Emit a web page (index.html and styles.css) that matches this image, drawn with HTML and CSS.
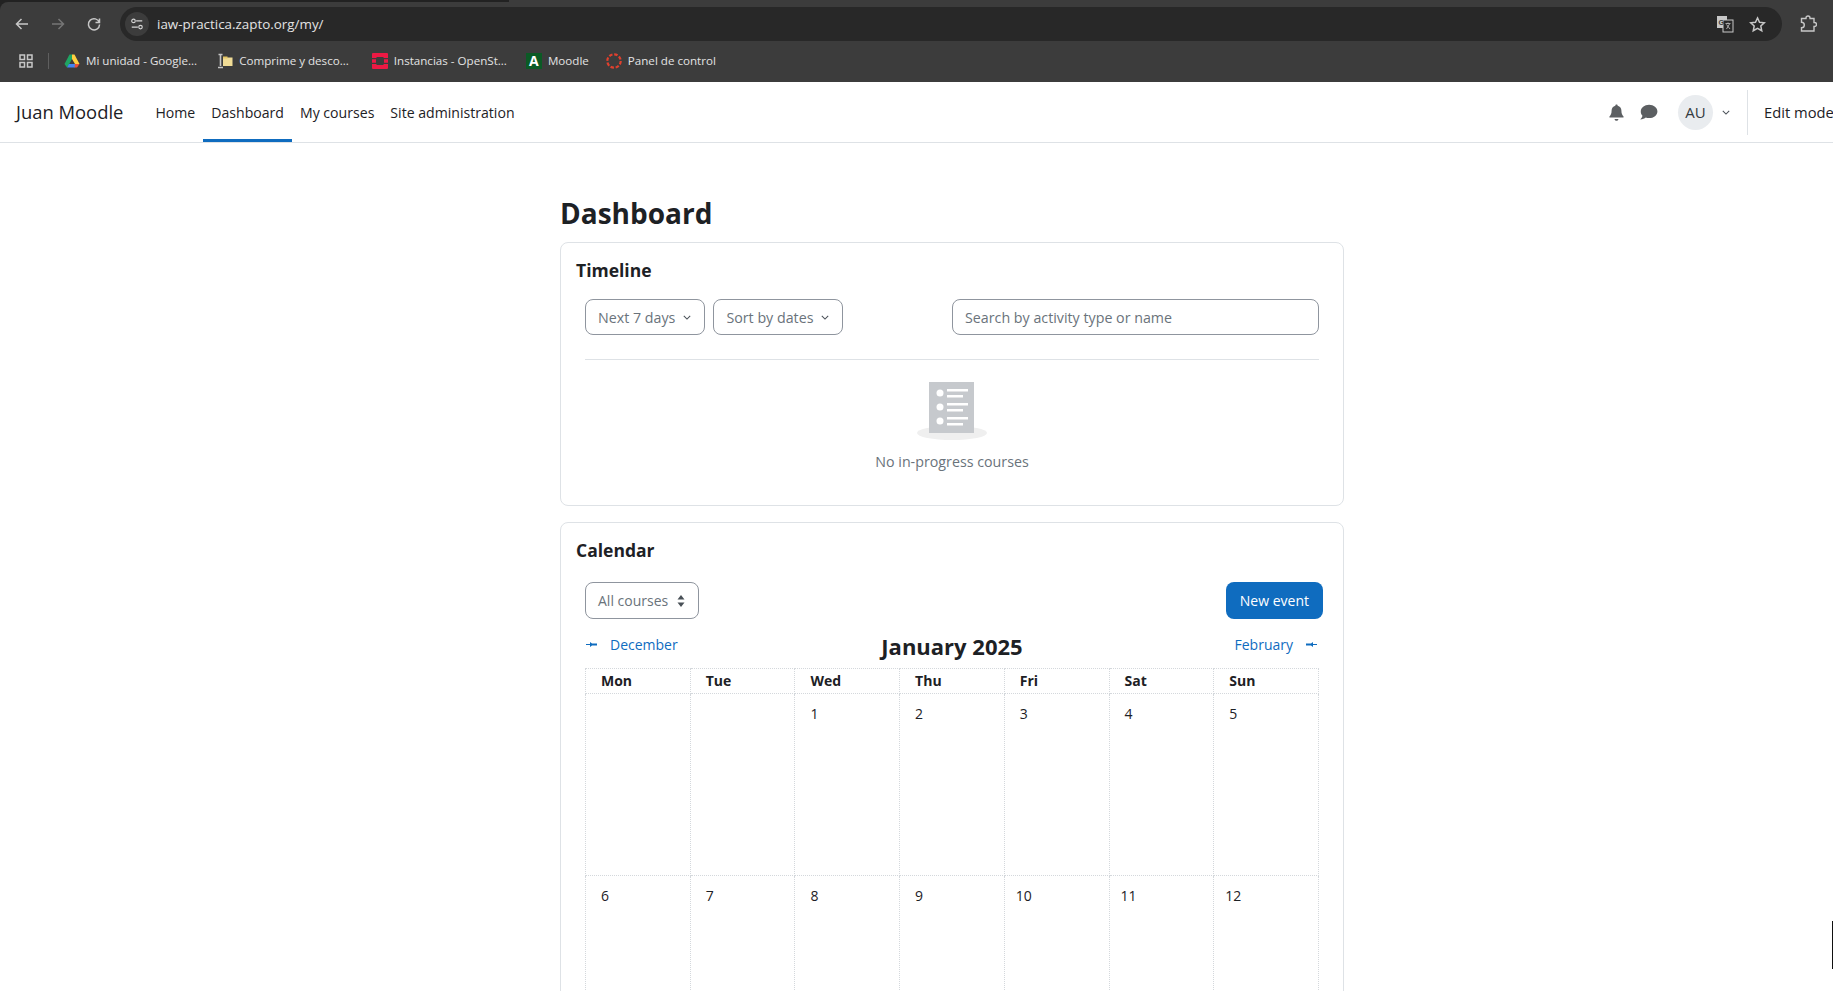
FILE: index.html
```html
<!DOCTYPE html>
<html lang="en">
<head>
    <meta charset="UTF-8">
    <title>Dashboard</title>
    <link rel="stylesheet" href="styles.css">
</head>
<body>
    <div class="browser">
        <div class="tabstrip"></div>
        <div class="toolbar">
            <div class="tool-buttons">
                <svg class="tool-icon" viewBox="0 0 16 16"><path d="M14 8H3M7.500 3 2.500 8l5 5"/></svg>
                <svg class="tool-icon dim" viewBox="0 0 16 16"><path d="M2 8h11M8.500 3l5 5-5 5"/></svg>
                <svg class="tool-icon" viewBox="0 0 16 16"><path d="M13.300 6.500A5.600 5.600 0 1 0 13.600 8.500M13.500 2.500v4h-4"/></svg>
            </div>
            <div class="omnibox">
                <span class="site-info">
                    <svg viewBox="0 0 16 16"><path d="M7 4.500h7M2 11.500h7"/><circle cx="4" cy="4.500" r="2"/><circle cx="12" cy="11.500" r="2"/></svg>
                </span>
                <span class="url">iaw-practica.zapto.org/my/</span>
                <span class="omni-right">
                    <svg class="translate" viewBox="0 0 18 18">
                        <rect x="1" y="1" width="10" height="12" fill="#c7c7c7"/>
                        <rect x="7" y="5" width="10" height="12" fill="#282828" stroke="#c7c7c7"/>
                        <text x="2.500" y="10" class="tr-g">G</text>
                        <path d="M9.500 8.500h5M12 7.500v1M10.500 14l3-5M10.500 9.500l3.500 4.500" class="tr-x"/>
                    </svg>
                    <svg class="star" viewBox="0 0 16 16"><path d="M8 1.800l1.900 4.100 4.500.5-3.300 3 .9 4.500L8 11.700l-4 2.200.9-4.500-3.300-3 4.500-.5z"/></svg>
                </span>
            </div>
            <svg class="puzzle" viewBox="0 0 18 18"><path d="M2.500 3.500h4.500V3a2 2 0 0 1 4 0v.5h4v4h.5a2 2 0 0 1 0 4H15V16H2.500v-3.200a2.800 2.800 0 0 0 0-5.600z"/></svg>
        </div>
        <div class="bookmarks">
            <svg class="apps" viewBox="0 0 14 14"><path d="M1 1h4.500v4.500H1zM8.500 1H13v4.500H8.500zM1 8.500h4.500V13H1zM8.500 8.500H13V13H8.500z"/></svg>
            <span class="bm-sep"></span>
            <a class="bm">
                <svg viewBox="0 0 16 16">
                    <path d="M5.500 1.500H8V6l-3 5.500-2 3L.5 11z" fill="#1fa463"/>
                    <path d="M8 1.500h2.500l5 9.500H11L8 6z" fill="#ffcf3f"/>
                    <path d="M5 11h8l-2 3.500H3z" fill="#4285f4"/>
                    <path d="M11 11h4.500L13 14.500h-2.500z" fill="#e8503a"/>
                </svg>
                Mi unidad - Google...
            </a>
            <a class="bm">
                <svg viewBox="0 0 16 16">
                    <path d="M6 4.500h9.500V13H6z" fill="#f0dc96"/>
                    <path d="M6 3.500h4.500v2H6z" fill="#e6c765"/>
                    <path d="M1.500 1.500h4M3.500 1.500V13M1 14.500h5" stroke="#c4c4c4" stroke-width="1.600" fill="none"/>
                </svg>
                Comprime y desco...
            </a>
            <a class="bm bm-openstack">
                <svg viewBox="0 0 16 16">
                    <path d="M1 0h14a1 1 0 0 1 1 1v4h-4.500V4h-7v1H0V1a1 1 0 0 1 1-1zM0 11h4.500v1h7v-1H16v4a1 1 0 0 1-1 1H1a1 1 0 0 1-1-1z" fill="#ed1944"/>
                    <path d="M0 6.200h4v3.600H0zM12 6.200h4v3.600h-4z" fill="#ed1944"/>
                </svg>
                Instancias - OpenSt...
            </a>
            <a class="bm bm-moodle">
                <span class="fav-a">A</span>
                Moodle
            </a>
            <a class="bm">
                <svg viewBox="0 0 16 16"><circle cx="8" cy="8" r="6.700" fill="none" stroke="#e0402e" stroke-width="2.200" stroke-dasharray="3.500 1.760"/></svg>
                Panel de control
            </a>
        </div>
    </div>

    <div class="navbar">
        <a class="brand">Juan Moodle</a>
        <nav class="menu">
            <a>Home</a>
            <a class="active">Dashboard</a>
            <a>My courses</a>
            <a>Site administration</a>
        </nav>
        <div class="user-area">
            <svg class="nav-icon bell" viewBox="0 0 16 16"><path d="M8 .5c.7 0 1.100.5 1.100 1.100 2.300.5 3.500 2.400 3.500 4.600 0 3.300 1 4.400 2 5.500.3.400.1 1-.5 1H1.900c-.6 0-.8-.6-.5-1 1-1.100 2-2.200 2-5.500 0-2.200 1.200-4.100 3.500-4.600C6.900 1 7.300.5 8 .5zM6.200 14h3.600c0 1-.8 1.800-1.800 1.800S6.200 15 6.200 14z"/></svg>
            <svg class="nav-icon msg" viewBox="0 0 16 16"><path d="M8.500 1.500c3.900 0 7 2.500 7 5.600s-3.100 5.600-7 5.600c-1 0-2-.2-2.800-.5-1 .8-2.600 1.600-4.600 1.600.9-.9 1.600-2.100 1.800-3.100C1.900 9.700 1.500 8.500 1.500 7.100c0-3.100 3.100-5.600 7-5.600z"/></svg>
            <span class="avatar">AU</span>
            <svg class="chevron user-chevron" viewBox="0 0 10 6"><path d="M1 1l4 4 4-4"/></svg>
            <span class="nav-divider"></span>
            <span class="edit-mode">Edit mode</span>
        </div>
    </div>

    <div class="page">
        <h1>Dashboard</h1>

        <section class="card timeline">
            <h2>Timeline</h2>
            <div class="controls">
                <button class="select-btn">Next 7 days <svg class="chevron" viewBox="0 0 10 6"><path d="M1 1l4 4 4-4"/></svg></button>
                <button class="select-btn">Sort by dates <svg class="chevron" viewBox="0 0 10 6"><path d="M1 1l4 4 4-4"/></svg></button>
                <div class="search">Search by activity type or name</div>
            </div>
            <div class="empty">
                <svg class="empty-icon" viewBox="0 0 70 62">
                    <ellipse cx="35" cy="53" rx="35" ry="7" fill="#efefef"/>
                    <rect x="12" y="2" width="45" height="51" fill="#c6c9cd"/>
                    <circle cx="23" cy="13" r="3.500" fill="#fff"/>
                    <circle cx="23" cy="27" r="3.500" fill="#fff"/>
                    <circle cx="23" cy="41" r="3.500" fill="#fff"/>
                    <path d="M30 9h21v2.500H30zM30 15h16v2.500H30zM30 23h21v2.500H30zM30 29h16v2.500H30zM30 37h21v2.500H30zM30 43h16v2.500H30z" fill="#fff"/>
                </svg>
                <p>No in-progress courses</p>
            </div>
        </section>

        <section class="card calendar">
            <h2>Calendar</h2>
            <div class="cal-top">
                <button class="select-btn all-courses">All courses
                    <svg class="updown" viewBox="0 0 8 12"><path d="M4 0l3.500 4.500h-7zM4 12L.5 7.500h7z"/></svg>
                </button>
                <button class="new-event">New event</button>
            </div>
            <div class="cal-nav">
                <a class="month-link">
                    <svg class="month-arrow" viewBox="0 0 11 7"><path d="M0 3h4V1l2 1.500h5v2H6L4 6V4H0z"/></svg>
                    December
                </a>
                <h3>January 2025</h3>
                <a class="month-link">
                    February
                    <svg class="month-arrow" viewBox="0 0 11 7"><path d="M11 3H7V1L5 2.500H0v2h5L7 6V4h4z"/></svg>
                </a>
            </div>
            <table class="cal-table">
                <thead>
                    <tr><th>Mon</th><th>Tue</th><th>Wed</th><th>Thu</th><th>Fri</th><th>Sat</th><th>Sun</th></tr>
                </thead>
                <tbody>
                    <tr>
                        <td></td>
                        <td></td>
                        <td><span class="day">1</span></td>
                        <td><span class="day">2</span></td>
                        <td><span class="day">3</span></td>
                        <td><span class="day">4</span></td>
                        <td><span class="day">5</span></td>
                    </tr>
                    <tr>
                        <td><span class="day">6</span></td>
                        <td><span class="day">7</span></td>
                        <td><span class="day">8</span></td>
                        <td><span class="day">9</span></td>
                        <td><span class="day">10</span></td>
                        <td><span class="day">11</span></td>
                        <td><span class="day">12</span></td>
                    </tr>
                </tbody>
            </table>
        </section>
    </div>

    <div class="cursor-edge"></div>
</body>
</html>
```

FILE: styles.css
```css
* {
    box-sizing: border-box;
}

html, body {
    height: 100%;
}

body {
    margin: 0;
    overflow: hidden;
    background: #fff;
    color: #1d2125;
    font-family: "Open Sans", sans-serif;
    font-size: 14px;
}

/* browser window */
.browser {
    height: 82px;
    background: #222;
}

.tabstrip {
    height: 2px;
    background: linear-gradient(to right, #222 509px, #3c3c3c 509px);
}

.toolbar {
    height: 39px;
    display: flex;
    align-items: center;
    padding-top: 5px;
    border-top-left-radius: 8px;
    background: #3c3c3c;
}

.tool-buttons {
    width: 120px;
    display: flex;
    align-items: center;
    gap: 20px;
    padding-left: 14px;
}

.tool-icon {
    width: 16px;
    height: 16px;
    flex: none;
    fill: none;
    stroke: #c7c7c7;
    stroke-width: 1.500;
}

.tool-icon.dim {
    stroke: #757575;
}

.omnibox {
    width: 1662px;
    height: 34px;
    flex: none;
    display: flex;
    align-items: center;
    padding-left: 5px;
    border-radius: 17px;
    background: #282828;
    color: #e3e3e3;
    font-size: 13.400px;
}

.site-info {
    width: 24px;
    height: 24px;
    display: flex;
    align-items: center;
    justify-content: center;
    border-radius: 50%;
    background: #3c3c3c;
}

.site-info svg {
    width: 14px;
    height: 14px;
    fill: none;
    stroke: #d5d5d5;
    stroke-width: 1.300;
}

.url {
    margin-left: 8px;
}

.omni-right {
    margin-left: auto;
    display: flex;
    align-items: center;
    gap: 15px;
    padding-right: 16px;
}

.translate {
    width: 18px;
    height: 18px;
}

.tr-g {
    font-family: "Liberation Sans", sans-serif;
    font-size: 7px;
    font-weight: bold;
    fill: #3c3c3c;
}

.tr-x {
    fill: none;
    stroke: #c7c7c7;
    stroke-width: .8;
}

.star {
    width: 17px;
    height: 17px;
    fill: none;
    stroke: #c7c7c7;
    stroke-width: 1.400;
}

.puzzle {
    width: 18px;
    height: 18px;
    margin-left: 17px;
    fill: none;
    stroke: #c7c7c7;
    stroke-width: 1.400;
}

.bookmarks {
    height: 41px;
    display: flex;
    align-items: center;
    padding: 0 0 2px 19px;
    background: #3c3c3c;
    color: #e3e3e3;
    font-size: 11.600px;
}

.apps {
    width: 14px;
    height: 14px;
    fill: none;
    stroke: #c7c7c7;
    stroke-width: 1.500;
}

.bm-sep {
    width: 1px;
    height: 16px;
    margin: 0 15px 0 15px;
    background: #5f5f5f;
}

.bm {
    display: flex;
    align-items: center;
    gap: 6px;
    margin-right: 20px;
}

.bm-openstack {
    margin-left: 3px;
    margin-right: 19px;
}

.bm-moodle {
    margin-right: 17px;
}

.bm svg {
    width: 16px;
    height: 16px;
}

.fav-a {
    width: 16px;
    height: 16px;
    display: flex;
    align-items: center;
    justify-content: center;
    background: #0b5a25;
    color: #fff;
    font-size: 14px;
    font-weight: 700;
}

/* moodle navbar */
.navbar {
    height: 61px;
    display: flex;
    align-items: stretch;
    border-bottom: 1px solid #dee2e6;
    background: #fff;
    overflow: hidden;
}

.brand {
    align-self: center;
    margin-left: 16px;
    padding-bottom: 2px;
    font-size: 18.400px;
}

.menu {
    display: flex;
    margin-left: 24px;
    font-size: 14.100px;
}

.menu a {
    display: flex;
    align-items: center;
    padding: 0 8px;
    border-bottom: 3px solid transparent;
    padding-top: 3px;
}

.menu a.active {
    border-bottom-color: #0f6cbf;
}

.user-area {
    margin-left: auto;
    display: flex;
    align-items: center;
    flex: none;
    width: 225px;
    white-space: nowrap;
}

.nav-icon {
    flex: none;
    fill: #5c5f62;
}

.nav-icon.bell {
    width: 17px;
    height: 17px;
}

.nav-icon.msg {
    width: 19px;
    height: 19px;
    margin-left: 14px;
}

.avatar {
    width: 35px;
    height: 35px;
    margin-left: 20px;
    display: flex;
    align-items: center;
    justify-content: center;
    flex: none;
    border-radius: 50%;
    background: #e9ecef;
    color: #343a40;
    font-size: 15px;
}

.chevron {
    width: 8px;
    height: 5px;
    flex: none;
    fill: none;
    stroke: #495057;
    stroke-width: 1.300;
}

.user-chevron {
    margin-left: 9px;
}

.nav-divider {
    width: 1px;
    height: 45px;
    flex: none;
    margin: 0 16px 0 17px;
    background: #dee2e6;
}

.edit-mode {
    font-size: 14.750px;
}

/* page content */
.page {
    width: 784px;
    margin-left: 560px;
}

h1 {
    margin: 0;
    padding-top: 50px;
    height: 99px;
    font-size: 28px;
    line-height: 40px;
    font-weight: 700;
}

.card {
    border: 1px solid #dee2e6;
    border-radius: 8px;
    background: #fff;
}

.card h2 {
    margin: 0;
    font-size: 17.500px;
    line-height: 24px;
    font-weight: 700;
}

.timeline {
    height: 264px;
    padding: 15px 24px 0 15px;
}

.controls {
    display: flex;
    margin: 17px 0 0 9px;
    padding-bottom: 24px;
    border-bottom: 1px solid #dee2e6;
}

.select-btn {
    height: 36px;
    display: flex;
    align-items: center;
    gap: 8px;
    padding: 0 13px 0 12px;
    border: 1px solid #8f959e;
    border-radius: 8px;
    background: #fff;
    color: #6a737b;
    font-family: inherit;
    font-size: 14.250px;
}

.select-btn + .select-btn {
    margin-left: 8px;
}

.search {
    width: 367px;
    height: 36px;
    margin-left: auto;
    display: flex;
    align-items: center;
    padding: 0 12px;
    border: 1px solid #8f959e;
    border-radius: 8px;
    color: #6a737b;
    font-size: 14.250px;
}

.empty {
    display: flex;
    flex-direction: column;
    align-items: center;
    margin-left: 9px;
    padding-top: 20px;
    color: #6a737b;
}

.empty-icon {
    width: 70px;
    height: 62px;
}

.empty p {
    margin: 10px 0 0;
    font-size: 14.250px;
}

.calendar {
    margin-top: 16px;
    height: 600px;
    padding: 15px 20px 0 15px;
}

.cal-top {
    display: flex;
    justify-content: space-between;
    margin: 20px 0 0 9px;
}

.all-courses {
    height: 37px;
    gap: 9px;
    font-size: 14px;
}

.updown {
    width: 8px;
    height: 12px;
    fill: #495057;
}

.new-event {
    height: 37px;
    padding: 0 14px;
    border: 0;
    border-radius: 8px;
    background: #0f6cbf;
    color: #fff;
    font-family: inherit;
    font-size: 14px;
}

.cal-nav {
    display: grid;
    grid-template-columns: 1fr auto 1fr;
    align-items: center;
    margin: 8px 4px 3px 9px;
    height: 38px;
}

.cal-nav h3 {
    margin: 0;
    font-size: 22px;
    font-weight: 700;
    line-height: 30px;
}

.month-link {
    display: flex;
    align-items: center;
    gap: 13px;
    padding: 0 2px 3px 1px;
    color: #0f6cbf;
}

.month-link:last-child {
    justify-content: flex-end;
}

.month-arrow {
    width: 11px;
    height: 7px;
    fill: #0f6cbf;
}

.cal-table {
    width: 734px;
    margin-left: 9px;
    border-collapse: collapse;
    table-layout: fixed;
}

.cal-table th,
.cal-table td {
    border: 1px dotted #d4d8dc;
    text-align: left;
    vertical-align: top;
    padding: 0 0 0 15px;
}

.cal-table th {
    height: 24px;
    font-size: 14px;
    font-weight: 700;
    line-height: 24px;
}

.cal-table td {
    height: 182px;
    padding: 10px 0 0 7px;
    line-height: 20px;
}

.day {
    display: inline-block;
    width: 24px;
    text-align: center;
}

.cursor-edge {
    position: absolute;
    right: 0;
    top: 921px;
    width: 1px;
    height: 48px;
    background: #111;
}
```
